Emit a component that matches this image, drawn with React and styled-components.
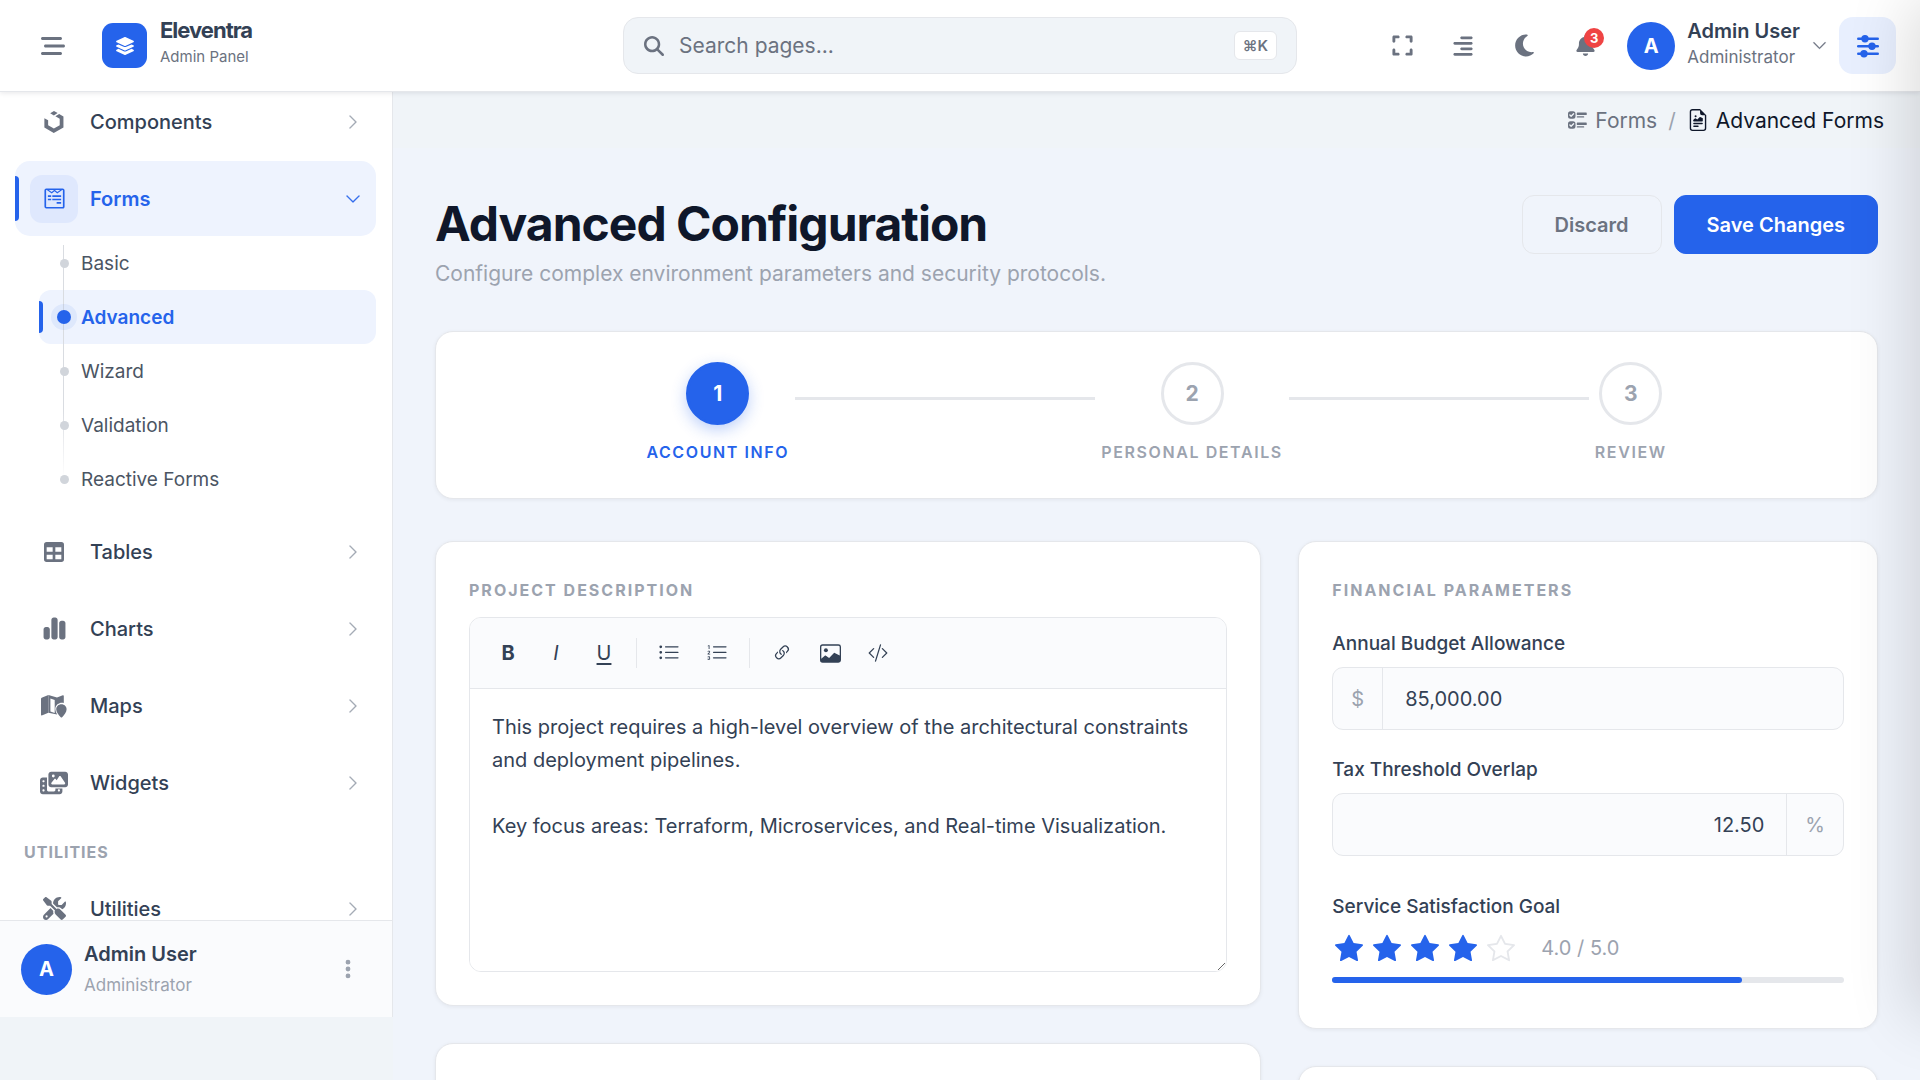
import React, { useState } from 'react';
import styled, { createGlobalStyle, css } from 'styled-components';
import {
  FaAlignRight,
  FaBarsStaggered,
  FaBell,
  FaChartSimple,
  FaEllipsisVertical,
  FaExpand,
  FaLayerGroup,
  FaMagnifyingGlass,
  FaMoon,
  FaPhotoFilm,
  FaScrewdriverWrench,
  FaUikit,
  FaWpforms,
} from 'react-icons/fa6';
import {
  BsChevronDown,
  BsChevronRight,
  BsCodeSlash,
  BsFileEarmarkRichtext,
  BsImage,
  BsLink45Deg,
  BsListOl,
  BsListUl,
  BsStar,
  BsStarFill,
  BsUiChecks,
} from 'react-icons/bs';

const colors = {
  primary: '#2563eb',
  primarySoft: '#eef3fe',
  primaryTint: '#dfe8fd',
  heading: '#0f172a',
  text: '#334155',
  muted: '#6b7280',
  faint: '#9ca3af',
  border: '#e5e7eb',
  field: '#fafbfd',
  body: '#f0f4f8',
  content: '#f0f4fb',
};

const GlobalStyle = createGlobalStyle`
  *, *::before, *::after {
    box-sizing: border-box;
  }

  body {
    margin: 0;
    background: ${colors.body};
    color: ${colors.text};
    font-family: Inter, "Liberation Sans", sans-serif;
    font-size: 20px;
    overflow: hidden;
  }

  button, input, textarea {
    font: inherit;
    color: inherit;
  }

  h1, h2, p, ul {
    margin: 0;
    padding: 0;
  }

  ul {
    list-style: none;
  }

  a {
    color: inherit;
    text-decoration: none;
  }

  svg {
    flex: none;
  }
`;

const Page = styled.div`
  height: 100vh;
  display: flex;
  flex-direction: column;
`;

const Header = styled.header`
  position: relative;
  z-index: 2;
  flex: none;
  height: 92px;
  display: grid;
  grid-template-columns: 1fr 36% 1fr;
  align-items: center;
  padding: 0 24px;
  background: #fff;
  border-bottom: 1px solid ${colors.border};
  box-shadow: 0 1px 5px rgba(15, 23, 42, 0.1);
`;

const HeaderSide = styled.div`
  display: flex;
  align-items: center;
  justify-content: ${({ $end }) => ($end ? 'flex-end' : 'flex-start')};
`;

const IconButton = styled.button`
  position: relative;
  display: flex;
  align-items: center;
  justify-content: center;
  width: ${({ $size }) => $size || 46}px;
  height: ${({ $size }) => $size || 46}px;
  padding: 0;
  border: 0;
  border-radius: 14px;
  background: ${({ $active }) => ($active ? '#e8effe' : 'transparent')};
  color: ${({ $active }) => ($active ? colors.primary : colors.muted)};
  cursor: pointer;
`;

const Actions = styled.div`
  display: flex;
  gap: 15px;
  margin-right: 19px;
`;

const Brand = styled.a`
  display: flex;
  align-items: center;
  gap: 13px;
  margin-left: 21px;
`;

const BrandMark = styled.span`
  display: flex;
  align-items: center;
  justify-content: center;
  width: 45px;
  height: 45px;
  border-radius: 11px;
  background: ${colors.primary};
  color: #fff;
`;

const Stack = styled.span`
  display: flex;
  flex-direction: column;
  gap: ${({ $gap }) => $gap || 0}px;
`;

const HeaderStack = styled(Stack)`
  padding-bottom: 4px;
`;

const Name = styled.span`
  font-size: 20px;
  line-height: 26px;
  font-weight: 600;
  color: ${colors.text};
`;

const BrandName = styled(Name)`
  font-size: 22px;
  font-weight: 700;
  letter-spacing: -1px;
`;

const Role = styled.span`
  font-size: ${({ $size }) => $size || 17}px;
  line-height: 26px;
  color: ${({ $faint }) => ($faint ? colors.faint : colors.muted)};
`;

const SearchBox = styled.label`
  display: flex;
  align-items: center;
  height: 57px;
  padding: 0 19px 0 20px;
  border: 1px solid ${colors.border};
  border-radius: 15px;
  background: ${colors.body};
  color: ${colors.muted};
`;

const SearchInput = styled.input`
  flex: 1;
  min-width: 0;
  margin-left: 15px;
  padding: 0;
  border: 0;
  outline: 0;
  background: transparent;
  font-size: 21px;

  &::placeholder {
    color: ${colors.muted};
    opacity: 1;
  }
`;

const Kbd = styled.kbd`
  padding: 0 8px;
  border: 1px solid ${colors.border};
  border-radius: 6px;
  background: #fff;
  font-family: Inter, "DejaVu Sans", sans-serif;
  font-size: 15px;
  font-weight: 600;
  line-height: 27px;
`;

const Badge = styled.span`
  position: absolute;
  top: 5px;
  right: 4px;
  width: 20px;
  height: 20px;
  border-radius: 50%;
  background: #ef4444;
  color: #fff;
  font-size: 13px;
  font-weight: 700;
  line-height: 20px;
  text-align: center;
`;

const Avatar = styled.span`
  display: flex;
  align-items: center;
  justify-content: center;
  flex: none;
  width: ${({ $size }) => $size}px;
  height: ${({ $size }) => $size}px;
  border-radius: 50%;
  background: ${colors.primary};
  color: #fff;
  font-size: 20px;
  font-weight: 700;
`;

const UserButton = styled.button`
  display: flex;
  align-items: center;
  gap: 12px;
  margin-right: 12px;
  padding: 0;
  border: 0;
  background: transparent;
  color: ${colors.muted};
  text-align: left;
  cursor: pointer;
`;

const Body = styled.div`
  flex: 1;
  min-height: 0;
  display: flex;
  align-items: flex-start;
`;

const Sidebar = styled.aside`
  flex: none;
  width: 393px;
  height: calc(100% - 63px);
  display: flex;
  flex-direction: column;
  background: #fff;
  border-right: 1px solid ${colors.border};
`;

const Nav = styled.nav`
  flex: 1;
  min-height: 0;
  overflow: hidden;
  padding: 0 16px 0 15px;
`;

const NavList = styled.ul`
  margin-top: -8px;
`;

const NavItem = styled.li`
  margin-bottom: 2px;
`;

const NavLink = styled.a`
  position: relative;
  display: flex;
  align-items: center;
  gap: 12px;
  height: 75px;
  padding: 0 15px;
  border-radius: 15px;
  font-weight: ${({ $active }) => ($active ? 600 : 500)};
  color: ${({ $active }) => ($active ? colors.primary : colors.text)};
  background: ${({ $active }) => ($active ? colors.primarySoft : 'transparent')};

  & > svg {
    margin-left: auto;
    stroke: currentColor;
    stroke-width: 0.4;
    color: ${({ $active }) => ($active ? colors.primary : colors.faint)};
  }
`;

const ActiveBar = styled.span`
  position: absolute;
  left: 0;
  top: 20%;
  bottom: 20%;
  width: 4px;
  border-radius: 0 4px 4px 0;
  background: ${colors.primary};
`;

const NavIcon = styled.span`
  display: flex;
  align-items: center;
  justify-content: center;
  width: 48px;
  height: 48px;
  border-radius: 12px;
  background: ${({ $active }) => ($active ? colors.primaryTint : 'transparent')};
  color: ${({ $active }) => ($active ? colors.primary : colors.muted)};
`;

const SubList = styled.ul`
  position: relative;
  margin: 0 0 8px 24px;

  &::before {
    content: '';
    position: absolute;
    z-index: 1;
    left: 24px;
    top: 9px;
    bottom: 27px;
    width: 1px;
    background: linear-gradient(#d9dce1 70%, transparent);
  }
`;

const SubLink = styled.a`
  position: relative;
  display: flex;
  align-items: center;
  height: 54px;
  border-radius: 12px;
  font-size: 19px;
  color: #4b5563;

  ${({ $active }) =>
    $active &&
    css`
      font-weight: 600;
      color: ${colors.primary};
      background: ${colors.primarySoft};
    `}
`;

const Dot = styled.span`
  position: relative;
  z-index: 2;
  width: ${({ $active }) => ($active ? 14 : 9)}px;
  height: ${({ $active }) => ($active ? 14 : 9)}px;
  margin: 0 ${({ $active }) => ($active ? '10px 0 18px' : '12px 0 21px')};
  border-radius: 50%;
  background: ${({ $active }) => ($active ? colors.primary : '#d1d5db')};
  box-shadow: ${({ $active }) => ($active ? '0 0 0 6px rgba(37, 99, 235, 0.08)' : 'none')};
`;

const NavHeading = styled.li`
  padding: 20px 9px 9px;
  font-size: 16px;
  font-weight: 700;
  line-height: 20px;
  letter-spacing: 1px;
  color: ${colors.faint};
`;

const SidebarFooter = styled.div`
  flex: none;
  display: flex;
  align-items: center;
  gap: 12px;
  height: 97px;
  padding: 0 21px;
  border-top: 1px solid ${colors.border};
  background: ${colors.field};

  & > button {
    margin-left: auto;
    color: ${colors.faint};
  }
`;

const Main = styled.main`
  flex: 1;
  min-width: 0;
  height: 100%;
  display: flex;
  flex-direction: column;
`;

const Breadcrumb = styled.nav`
  flex: none;
  display: flex;
  align-items: center;
  justify-content: flex-end;
  gap: 8px;
  height: 56px;
  padding: 0 36px;
  font-size: 21px;
  color: ${colors.muted};
`;

const Separator = styled.span`
  margin: 0 3px;
  color: ${colors.faint};
`;

const Crumb = styled.a`
  display: flex;
  align-items: center;
  gap: 7px;
  color: ${({ $current }) => ($current ? colors.heading : colors.muted)};
`;

const Content = styled.div`
  flex: 1;
  min-height: 0;
  overflow: auto;
  scrollbar-width: none;
  padding: 47px 42px;
  background: ${colors.content};
`;

const PageHead = styled.div`
  display: flex;
  align-items: flex-start;
  justify-content: space-between;
  margin-bottom: 40px;
`;

const Title = styled.h1`
  font-size: 48px;
  font-weight: 700;
  line-height: 58px;
  letter-spacing: -1px;
  color: ${colors.heading};
`;

const Subtitle = styled.p`
  margin-top: 4px;
  font-size: 21px;
  line-height: 34px;
  color: ${colors.faint};
`;

const ButtonRow = styled.div`
  display: flex;
  gap: 12px;
`;

const Button = styled.button`
  height: 59px;
  padding: 0 32px;
  border: 1px solid ${({ $primary }) => ($primary ? colors.primary : colors.border)};
  border-radius: 12px;
  background: ${({ $primary }) => ($primary ? colors.primary : 'transparent')};
  color: ${({ $primary }) => ($primary ? '#fff' : colors.muted)};
  font-size: 20px;
  font-weight: 600;
  cursor: pointer;
`;

const Card = styled.section`
  padding: 33px;
  border: 1px solid ${colors.border};
  border-radius: 18px;
  background: #fff;
  box-shadow: 0 1px 4px rgba(15, 23, 42, 0.06);
`;

const Stepper = styled(Card)`
  display: flex;
  align-items: flex-start;
  justify-content: center;
  gap: 6px;
  margin-bottom: 42px;
  padding: 30px;
`;

const Step = styled.div`
  display: flex;
  flex-direction: column;
  align-items: center;
  gap: 15px;
  padding-bottom: 4px;
  font-size: 16px;
  font-weight: 600;
  line-height: 24px;
  letter-spacing: 0.1em;
  color: ${({ $active }) => ($active ? colors.primary : colors.faint)};
`;

const StepCircle = styled.span`
  display: flex;
  align-items: center;
  justify-content: center;
  width: 63px;
  height: 63px;
  border: 3px solid ${colors.border};
  border-radius: 50%;
  font-size: 21px;
  font-weight: 700;
  letter-spacing: 0;

  ${({ $active }) =>
    $active &&
    css`
      border-color: ${colors.primary};
      background: ${colors.primary};
      color: #fff;
      box-shadow: 0 5px 15px rgba(37, 99, 235, 0.3);
    `}
`;

const StepLine = styled.span`
  flex: 0 1 300px;
  height: 3px;
  margin-top: 35px;
  background: ${colors.border};
`;

const Columns = styled.div`
  display: grid;
  grid-template-columns: repeat(12, 1fr);
  gap: 37px;
`;

const Column = styled.div`
  grid-column: span ${({ $span }) => $span};
  display: flex;
  flex-direction: column;
  gap: 37px;
`;

const NextCard = styled(Card)`
  min-height: 240px;
`;

const CardTitle = styled.h2`
  margin-bottom: ${({ $gap }) => $gap}px;
  font-size: 16px;
  font-weight: 700;
  line-height: 30px;
  letter-spacing: 2px;
  color: ${colors.faint};
`;

const Editor = styled.div`
  border: 1px solid ${colors.border};
  border-radius: 12px;
  overflow: hidden;
`;

const Toolbar = styled.div`
  display: flex;
  align-items: center;
  gap: 8px;
  height: 71px;
  padding: 0 18px;
  border-bottom: 1px solid ${colors.border};
  background: ${colors.field};
`;

const ToolButton = styled.button`
  display: flex;
  align-items: center;
  justify-content: center;
  width: 40px;
  height: 40px;
  padding: 0;
  border: 0;
  background: transparent;
  color: ${colors.text};
  font-size: 20px;
  cursor: pointer;

  u {
    text-underline-offset: 3px;
  }
`;

const ToolDivider = styled.span`
  width: 1px;
  height: 30px;
  margin: 0 4px;
  background: ${colors.border};
`;

const TextArea = styled.textarea`
  display: block;
  width: 100%;
  height: 282px;
  padding: 22px;
  border: 0;
  outline: 0;
  resize: vertical;
  font-size: 20px;
  line-height: 33px;
`;

const Field = styled.div`
  margin-bottom: ${({ $gap }) => $gap}px;
`;

const Label = styled.label`
  display: block;
  margin-bottom: 8px;
  font-size: 19px;
  font-weight: 500;
  line-height: 30px;
`;

const InputGroup = styled.div`
  display: flex;
  height: 63px;
  border: 1px solid ${colors.border};
  border-radius: 11px;
  background: ${colors.field};
  overflow: hidden;
`;

const Input = styled.input`
  flex: 1;
  min-width: 0;
  padding: 0 22px;
  border: 0;
  outline: 0;
  background: transparent;
  text-align: ${({ $right }) => ($right ? 'right' : 'left')};
`;

const Addon = styled.span`
  display: flex;
  align-items: center;
  padding: 0 18px;
  color: ${colors.faint};
  border: 0 solid ${colors.border};
  border-${({ $side }) => $side}-width: 1px;
`;

const Rating = styled.div`
  display: flex;
  align-items: center;
  gap: 10px;
  height: 36px;
  padding-left: 3px;
  color: ${colors.primary};
`;

const RatingText = styled.span`
  margin-left: 16px;
  color: ${colors.faint};
`;

const Track = styled.div`
  height: 6px;
  margin: 11px 0 12px;
  border-radius: 3px;
  background: ${colors.border};
`;

const TrackFill = styled.div`
  height: 100%;
  border-radius: 3px;
  background: ${colors.primary};
`;

// closed settings drawer, waits just past the right edge
const Drawer = styled.aside`
  position: fixed;
  z-index: 3;
  top: 0;
  left: 100%;
  width: 400px;
  height: calc(100vh - 63px);
  background: #fff;
  box-shadow: -10px 0 60px rgba(0, 0, 0, 0.14);
  pointer-events: none;
`;

function MapPinIcon() {
  return (
    <svg width="26" height="24" viewBox="0 0 26 24" fill="currentColor">
      <path d="M7.4 1.1 1.2 3.4C.5 3.7 0 4.2 0 5v15.4c0 .8.7 1.2 1.4.9l6-2.5z" />
      <path d="M7.4 1.1 16 3.5l5.8-2.3c.6-.2 1 .1 1 .7v7.2c-3.6-1.2-8.2 1.2-8.5 5.5 0 2 .7 4 1.9 5.9L7.4 18.8l2-1.4 4.300 1.5V6L9.4 4.5v12.900l-2 1.4z" />
      <path d="M20.4 10.2c-3 0-5.2 2.2-5.2 5 0 2.9 2.5 6 4.5 8 .4.4 1 .4 1.4 0 2-2 4.5-5.1 4.5-8 0-2.8-2.3-5-5.2-5z" />
    </svg>
  );
}

function TableIcon() {
  return (
    <svg width="20" height="20" viewBox="0 0 60 60" fill="currentColor" fillRule="evenodd">
      <path d="M8 0h44a8 8 0 0 1 8 8v44a8 8 0 0 1-8 8H8a8 8 0 0 1-8-8V8a8 8 0 0 1 8-8zM8 16v13h18V16zM34 16v13h18V16zM8 38v14h18V38zM34 38v14h18V38z" />
    </svg>
  );
}

function SlidersIcon() {
  return (
    <svg width="24" height="24" viewBox="0 0 24 24" fill="currentColor">
      <rect x="1" y="3.5" width="22" height="2.6" rx="1.3" />
      <rect x="1" y="11" width="22" height="2.6" rx="1.3" />
      <rect x="1" y="18.5" width="22" height="2.6" rx="1.3" />
      <circle cx="9" cy="4.8" r="3.7" />
      <circle cx="16" cy="12.3" r="3.7" />
      <circle cx="8" cy="19.8" r="3.7" />
    </svg>
  );
}

const formPages = ['Basic', 'Advanced', 'Wizard', 'Validation', 'Reactive Forms'];

const menu = [
  { label: 'Components', icon: <FaUikit size={22} /> },
  { label: 'Forms', icon: <FaWpforms size={23} />, active: true, children: formPages },
  { label: 'Tables', icon: <TableIcon /> },
  { label: 'Charts', icon: <FaChartSimple size={25} /> },
  { label: 'Maps', icon: <MapPinIcon /> },
  { label: 'Widgets', icon: <FaPhotoFilm size={28} /> },
  { heading: 'UTILITIES' },
  { label: 'Utilities', icon: <FaScrewdriverWrench size={23} /> },
];

const description = `This project requires a high-level overview of the architectural constraints and deployment pipelines.

Key focus areas: Terraform, Microservices, and Real-time Visualization.`;

function SideMenu() {
  return (
    <Nav>
      <NavList>
        {menu.map((item) =>
          item.heading ? (
            <NavHeading key={item.heading}>{item.heading}</NavHeading>
          ) : (
            <NavItem key={item.label}>
              <NavLink href="#" $active={item.active}>
                {item.active && <ActiveBar />}
                <NavIcon $active={item.active}>{item.icon}</NavIcon>
                {item.label}
                {item.active ? <BsChevronDown size={16} /> : <BsChevronRight size={16} />}
              </NavLink>
              {item.children && (
                <SubList>
                  {item.children.map((page) => (
                    <li key={page}>
                      <SubLink href="#" $active={page === 'Advanced'}>
                        {page === 'Advanced' && <ActiveBar />}
                        <Dot $active={page === 'Advanced'} />
                        {page}
                      </SubLink>
                    </li>
                  ))}
                </SubList>
              )}
            </NavItem>
          )
        )}
      </NavList>
    </Nav>
  );
}

function TopBar() {
  return (
    <Header>
      <HeaderSide>
        <IconButton $size={57} aria-label="Toggle menu">
          <FaBarsStaggered size={24} />
        </IconButton>
        <Brand href="#">
          <BrandMark>
            <FaLayerGroup size={20} />
          </BrandMark>
          <HeaderStack $gap={1}>
            <BrandName>Eleventra</BrandName>
            <Role $size={15}>Admin Panel</Role>
          </HeaderStack>
        </Brand>
      </HeaderSide>
      <SearchBox>
        <FaMagnifyingGlass size={20} />
        <SearchInput type="text" placeholder="Search pages..." aria-label="Search pages" />
        <Kbd>⌘K</Kbd>
      </SearchBox>
      <HeaderSide $end>
        <Actions>
          <IconButton aria-label="Full screen">
            <FaExpand size={23} />
          </IconButton>
          <IconButton aria-label="Text direction">
            <FaAlignRight size={22} />
          </IconButton>
          <IconButton aria-label="Dark mode">
            <FaMoon size={25} />
          </IconButton>
          <IconButton aria-label="Notifications">
            <FaBell size={21} />
            <Badge>3</Badge>
          </IconButton>
        </Actions>
        <UserButton>
          <Avatar $size={48}>A</Avatar>
          <HeaderStack>
            <Name>Admin User</Name>
            <Role>Administrator</Role>
          </HeaderStack>
          <BsChevronDown size={15} stroke="currentColor" strokeWidth={0.4} />
        </UserButton>
        <IconButton $size={57} $active aria-label="Settings">
          <SlidersIcon />
        </IconButton>
      </HeaderSide>
    </Header>
  );
}

function ProjectCard() {
  const [text, setText] = useState(description);

  return (
    <Card>
      <CardTitle $gap={12}>PROJECT DESCRIPTION</CardTitle>
      <Editor>
        <Toolbar>
          <ToolButton aria-label="Bold"><b>B</b></ToolButton>
          <ToolButton aria-label="Italic"><i>I</i></ToolButton>
          <ToolButton aria-label="Underline"><u>U</u></ToolButton>
          <ToolDivider />
          <ToolButton aria-label="Bulleted list"><BsListUl size={22} /></ToolButton>
          <ToolButton aria-label="Numbered list"><BsListOl size={22} /></ToolButton>
          <ToolDivider />
          <ToolButton aria-label="Link"><BsLink45Deg size={20} /></ToolButton>
          <ToolButton aria-label="Image"><BsImage size={21} /></ToolButton>
          <ToolButton aria-label="Code"><BsCodeSlash size={20} /></ToolButton>
        </Toolbar>
        <TextArea
          aria-label="Project description"
          spellCheck={false}
          value={text}
          onChange={(e) => setText(e.target.value)}
        />
      </Editor>
    </Card>
  );
}

function FinancialCard() {
  const rating = 4;

  return (
    <Card>
      <CardTitle $gap={24}>FINANCIAL PARAMETERS</CardTitle>
      <Field $gap={25}>
        <Label htmlFor="budget">Annual Budget Allowance</Label>
        <InputGroup>
          <Addon $side="right">$</Addon>
          <Input id="budget" type="text" defaultValue="85,000.00" />
        </InputGroup>
      </Field>
      <Field $gap={36}>
        <Label htmlFor="tax">Tax Threshold Overlap</Label>
        <InputGroup>
          <Input id="tax" type="text" defaultValue="12.50" $right />
          <Addon $side="left">%</Addon>
        </InputGroup>
      </Field>
      <Label as="div">Service Satisfaction Goal</Label>
      <Rating>
        {[1, 2, 3, 4, 5].map((n) =>
          n <= rating ? <BsStarFill key={n} size={28} /> : <BsStar key={n} size={28} color={colors.border} />
        )}
        <RatingText>4.0 / 5.0</RatingText>
      </Rating>
      <Track>
        <TrackFill style={{ width: `${(rating / 5) * 100}%` }} />
      </Track>
    </Card>
  );
}

export default function App() {
  return (
    <Page>
      <GlobalStyle />
      <TopBar />
      <Body>
        <Sidebar>
          <SideMenu />
          <SidebarFooter>
            <Avatar $size={51}>A</Avatar>
            <Stack $gap={5}>
              <Name>Admin User</Name>
              <Role $faint>Administrator</Role>
            </Stack>
            <IconButton aria-label="Account options">
              <FaEllipsisVertical size={22} />
            </IconButton>
          </SidebarFooter>
        </Sidebar>
        <Main>
          <Breadcrumb aria-label="Breadcrumb">
            <Crumb href="#">
              <BsUiChecks size={20} />
              Forms
            </Crumb>
            <Separator>/</Separator>
            <Crumb href="#" $current>
              <BsFileEarmarkRichtext size={22} />
              Advanced Forms
            </Crumb>
          </Breadcrumb>
          <Content>
            <PageHead>
              <div>
                <Title>Advanced Configuration</Title>
                <Subtitle>Configure complex environment parameters and security protocols.</Subtitle>
              </div>
              <ButtonRow>
                <Button>Discard</Button>
                <Button $primary>Save Changes</Button>
              </ButtonRow>
            </PageHead>
            <Stepper>
              <Step $active>
                <StepCircle $active>1</StepCircle>
                ACCOUNT INFO
              </Step>
              <StepLine />
              <Step>
                <StepCircle>2</StepCircle>
                PERSONAL DETAILS
              </Step>
              <StepLine />
              <Step>
                <StepCircle>3</StepCircle>
                REVIEW
              </Step>
            </Stepper>
            <Columns>
              <Column $span={7}>
                <ProjectCard />
                <NextCard />
              </Column>
              <Column $span={5}>
                <FinancialCard />
                <NextCard />
              </Column>
            </Columns>
          </Content>
        </Main>
      </Body>
      <Drawer aria-hidden="true" />
    </Page>
  );
}
